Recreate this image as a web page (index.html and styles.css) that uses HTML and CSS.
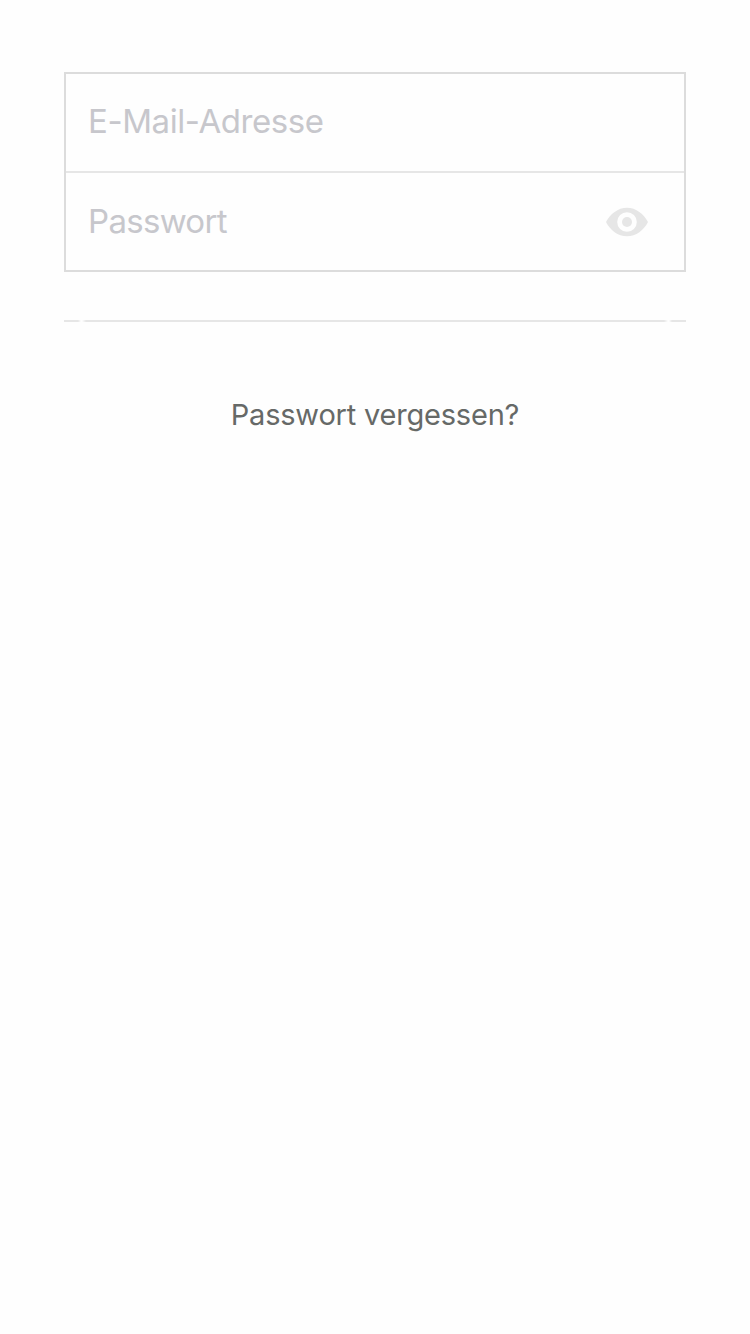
FILE: index.html
```html
<!DOCTYPE html>
<html lang="de">
<head>
<meta charset="utf-8">
<title>Anmelden</title>
<link rel="stylesheet" href="styles.css">
</head>
<body>
<main class="login">
  <form class="fields">
    <div class="field"><span class="label email">E-Mail-Adresse</span></div>
    <div class="field password"><span class="label pass">Passwort</span>
      <svg class="eye" viewBox="0 0 42 30" aria-hidden="true"><path fill-rule="evenodd" d="M0 15C4 7 12 .7 21 .7S38 7 42 15C38 23 30 29.3 21 29.3S4 23 0 15ZM21 5.2a9.8 9.8 0 1 0 0 19.6a9.8 9.8 0 0 0 0-19.6Z"/><circle cx="21" cy="15" r="5"/></svg>
    </div>
  </form>
  <div class="rule"></div>
  <a class="forgot"><span>Passwort vergessen?</span></a>
</main>
</body>
</html>
```
FILE: styles.css
```css
body {
  margin: 0;
  background: #fefefe;
  font-family: Inter, "Liberation Sans", sans-serif;
}
.login {
  display: flex;
  flex-direction: column;
  padding: 72px 64px 0;
}
.fields {
  box-sizing: border-box;
  height: 200px;
  border: 2px solid #dcdcdc;
}
.field {
  box-sizing: border-box;
  display: flex;
  align-items: center;
  justify-content: space-between;
  height: 97px;
  padding: 0 36px 0 22px;
  color: #c7c7cc;
  font-size: 33px;
}
.password {
  height: 99px;
  border-top: 2px solid #e6e6e6;
}
.label {
  white-space: nowrap;
}
.email {
  padding-bottom: 4px;
  letter-spacing: -0.42px;
}
.pass {
  padding-bottom: 2px;
  letter-spacing: -0.7px;
}
.eye {
  width: 42px;
  height: 30px;
  fill: #e6e6e6;
}
/* Divider with a short faded break near each end */
.rule {
  height: 2px;
  margin-top: 48px;
  background: linear-gradient(90deg,
    #e6e6e6 14px, #fefefe 17px, #fefefe 18px, #e6e6e6 22px,
    #e6e6e6 600px, #fefefe 604px, #fefefe 605px, #e6e6e6 608px);
}
.forgot {
  margin-top: 75px;
  text-align: center;
  color: #666967;
  font-size: 29px;
  line-height: 36px;
  letter-spacing: -0.2px;
}
```
